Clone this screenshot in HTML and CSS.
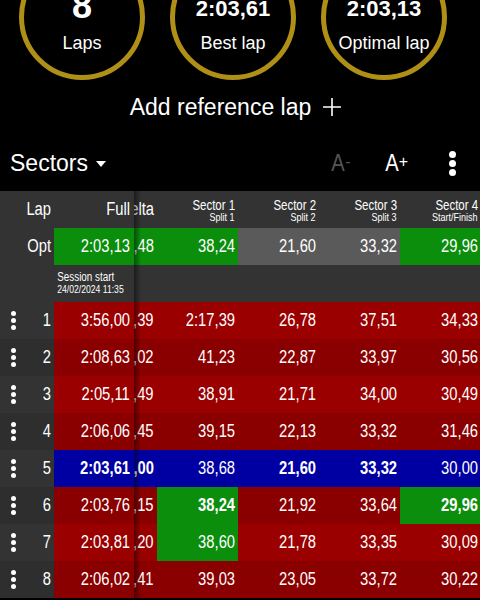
FILE: index.html
```html
<!DOCTYPE html>
<html lang="en">
<head>
    <meta charset="UTF-8">
    <meta name="viewport" content="width=device-width, initial-scale=1.0">
    <title>Session laps</title>
    <link rel="stylesheet" href="styles.css">
</head>
<body>
    <div class="summary">
        <div class="rings">
            <div class="ring">
                <div class="val big">8</div>
                <div class="label">Laps</div>
            </div>
            <div class="ring">
                <div class="val">2:03,61</div>
                <div class="label">Best lap</div>
            </div>
            <div class="ring">
                <div class="val">2:03,13</div>
                <div class="label">Optimal lap</div>
            </div>
        </div>
        <div class="add-ref">
            <span>Add reference lap</span>
            <svg width="20" height="20" viewBox="0 0 20 20"><path d="M10 1v18M1 10h18" stroke="#fff" stroke-width="1.6" fill="none"/></svg>
        </div>
    </div>

    <div class="toolbar">
        <div class="mode">Sectors <span class="caret"></span></div>
        <div class="tools">
            <span class="font-btn off"><span>A</span><sup>-</sup></span>
            <span class="font-btn"><span>A</span><sup>+</sup></span>
            <span class="menu"><i></i><i></i><i></i></span>
        </div>
    </div>

    <div class="table">
        <div class="row head">
            <div class="lap"><span>Lap</span></div>
            <div class="full"><span>Full</span></div>
            <div class="scroll"><div class="cols">
                <div class="c"><span>Delta</span></div>
                <div class="c two"><span>Sector 1</span><small>Split 1</small></div>
                <div class="c two"><span>Sector 2</span><small>Split 2</small></div>
                <div class="c two"><span>Sector 3</span><small>Split 3</small></div>
                <div class="c two"><span>Sector 4</span><small>Start/Finish</small></div>
            </div></div>
        </div>

        <div class="row opt">
            <div class="lap"><span>Opt</span></div>
            <div class="full green"><span>2:03,13</span></div>
            <div class="scroll"><div class="cols">
                <div class="c green"><span>-0,48</span></div>
                <div class="c green"><span>38,24</span></div>
                <div class="c grey"><span>21,60</span></div>
                <div class="c grey"><span>33,32</span></div>
                <div class="c green"><span>29,96</span></div>
            </div></div>
        </div>

        <div class="row session">
            <div class="lap"></div>
            <div class="note">
                <div class="note-title">Session start</div>
                <div class="note-date">24/02/2024 11:35</div>
            </div>
        </div>

        <div class="row lap-row odd">
            <div class="lap"><i class="dots"><i></i><i></i><i></i></i><span>1</span></div>
            <div class="full"><span>3:56,00</span></div>
            <div class="scroll"><div class="cols">
                <div class="c"><span>+1:52,39</span></div>
                <div class="c"><span>2:17,39</span></div>
                <div class="c"><span>26,78</span></div>
                <div class="c"><span>37,51</span></div>
                <div class="c"><span>34,33</span></div>
            </div></div>
        </div>
        <div class="row lap-row even">
            <div class="lap"><i class="dots"><i></i><i></i><i></i></i><span>2</span></div>
            <div class="full"><span>2:08,63</span></div>
            <div class="scroll"><div class="cols">
                <div class="c"><span>+5,02</span></div>
                <div class="c"><span>41,23</span></div>
                <div class="c"><span>22,87</span></div>
                <div class="c"><span>33,97</span></div>
                <div class="c"><span>30,56</span></div>
            </div></div>
        </div>
        <div class="row lap-row odd">
            <div class="lap"><i class="dots"><i></i><i></i><i></i></i><span>3</span></div>
            <div class="full"><span>2:05,11</span></div>
            <div class="scroll"><div class="cols">
                <div class="c"><span>+1,49</span></div>
                <div class="c"><span>38,91</span></div>
                <div class="c"><span>21,71</span></div>
                <div class="c"><span>34,00</span></div>
                <div class="c"><span>30,49</span></div>
            </div></div>
        </div>
        <div class="row lap-row even">
            <div class="lap"><i class="dots"><i></i><i></i><i></i></i><span>4</span></div>
            <div class="full"><span>2:06,06</span></div>
            <div class="scroll"><div class="cols">
                <div class="c"><span>+2,45</span></div>
                <div class="c"><span>39,15</span></div>
                <div class="c"><span>22,13</span></div>
                <div class="c"><span>33,32</span></div>
                <div class="c"><span>31,46</span></div>
            </div></div>
        </div>
        <div class="row lap-row best">
            <div class="lap"><i class="dots"><i></i><i></i><i></i></i><span>5</span></div>
            <div class="full b"><span>2:03,61</span></div>
            <div class="scroll"><div class="cols">
                <div class="c b"><span>0,00</span></div>
                <div class="c"><span>38,68</span></div>
                <div class="c b"><span>21,60</span></div>
                <div class="c b"><span>33,32</span></div>
                <div class="c"><span>30,00</span></div>
            </div></div>
        </div>
        <div class="row lap-row even">
            <div class="lap"><i class="dots"><i></i><i></i><i></i></i><span>6</span></div>
            <div class="full"><span>2:03,76</span></div>
            <div class="scroll"><div class="cols">
                <div class="c"><span>+0,15</span></div>
                <div class="c green b"><span>38,24</span></div>
                <div class="c"><span>21,92</span></div>
                <div class="c"><span>33,64</span></div>
                <div class="c green b"><span>29,96</span></div>
            </div></div>
        </div>
        <div class="row lap-row odd">
            <div class="lap"><i class="dots"><i></i><i></i><i></i></i><span>7</span></div>
            <div class="full"><span>2:03,81</span></div>
            <div class="scroll"><div class="cols">
                <div class="c"><span>+0,20</span></div>
                <div class="c green"><span>38,60</span></div>
                <div class="c"><span>21,78</span></div>
                <div class="c"><span>33,35</span></div>
                <div class="c"><span>30,09</span></div>
            </div></div>
        </div>
        <div class="row lap-row even">
            <div class="lap"><i class="dots"><i></i><i></i><i></i></i><span>8</span></div>
            <div class="full"><span>2:06,02</span></div>
            <div class="scroll"><div class="cols">
                <div class="c"><span>+2,41</span></div>
                <div class="c"><span>39,03</span></div>
                <div class="c"><span>23,05</span></div>
                <div class="c"><span>33,72</span></div>
                <div class="c"><span>30,22</span></div>
            </div></div>
        </div>

        <div class="shade"></div>
    </div>
</body>
</html>
```

FILE: styles.css
```css
body {
    margin: 0;
    background: #000;
    color: #fff;
    font-family: "Liberation Sans", Arial, sans-serif;
    overflow: hidden;
    height: 600px;
}

/* summary rings */
.rings {
    display: flex;
    gap: 25px;
    padding-left: 19px;
    margin-top: -46px;
}
.ring {
    width: 126px;
    height: 126px;
    box-sizing: border-box;
    border: 5px solid #b08f16;
    border-radius: 50%;
    display: flex;
    flex-direction: column;
    align-items: center;
    justify-content: flex-end;
    padding-bottom: 21px;
}
.val {
    font-size: 22px;
    font-weight: bold;
    line-height: 47px;
}
.val.big {
    font-size: 36px;
    line-height: 53px;
}
.label {
    font-size: 18px;
    line-height: 22px;
}
.add-ref {
    display: flex;
    justify-content: center;
    align-items: center;
    gap: 11px;
    margin-top: 12px;
    padding-right: 8px;
    font-size: 23px;
    line-height: 30px;
}

/* toolbar */
.toolbar {
    height: 69px;
    box-sizing: border-box;
    padding: 26px 24px 0 10px;
    display: flex;
    align-items: flex-start;
}
.mode {
    font-size: 23px;
    line-height: 30px;
    display: flex;
    align-items: center;
}
.caret {
    margin-left: 8px;
    margin-top: 2px;
    border-left: 5.5px solid transparent;
    border-right: 5.5px solid transparent;
    border-top: 6px solid #fff;
}
.tools {
    margin-left: auto;
    display: flex;
    align-items: flex-start;
}
.font-btn {
    display: flex;
    align-items: center;
    font-size: 24px;
    line-height: 30px;
    margin-right: 34px;
}
.font-btn span {
    display: inline-block;
    transform: scaleX(0.84);
    margin: 0 -1px;
}
.font-btn sup {
    font-size: 16px;
    line-height: 16px;
    margin-top: -3px;
}
.font-btn.off {
    color: #555;
}
.font-btn + .font-btn {
    margin-right: 41px;
}
.menu {
    display: flex;
    flex-direction: column;
    gap: 2px;
    margin-top: 3px;
}
.menu i {
    width: 7px;
    height: 7px;
    border-radius: 50%;
    background: #fff;
}

/* laps table, text squeezed to the narrow face of the app */
.table {
    position: relative;
    font-size: 18px;
}
.table span,
.table small {
    display: inline-block;
    transform: scaleX(0.82);
    transform-origin: 100% 50%;
    white-space: nowrap;
}
.row {
    display: grid;
    grid-template-columns: 54px 80px 1fr;
    height: 37px;
    background: #333;
}
.lap {
    display: flex;
    align-items: center;
    justify-content: flex-end;
    padding-right: 3px;
    background: #333;
}
.full {
    text-align: right;
    padding-right: 4px;
    line-height: 37px;
    white-space: nowrap;
    overflow: hidden;
}
.scroll {
    overflow: hidden;
}
.cols {
    display: flex;
    margin-left: -58px;
    height: 100%;
}
.c {
    flex: none;
    width: 81px;
    box-sizing: border-box;
    padding-right: 3px;
    text-align: right;
    line-height: 37px;
    white-space: nowrap;
}
.c.two {
    display: flex;
    flex-direction: column;
    justify-content: center;
    align-items: flex-end;
    padding-top: 1px;
}
.c.two span {
    font-size: 14px;
    line-height: 14px;
}
.c.two small {
    font-size: 11px;
    line-height: 11px;
}
.b {
    font-weight: bold;
}
.green {
    background: #0a8e0c;
}
.grey {
    background: #5a5a5a;
}

.session .note {
    grid-column: 2 / 4;
    padding: 6px 0 0 4px;
    transform: scaleX(0.82);
    transform-origin: 0 0;
}
.note-title {
    font-size: 12px;
    line-height: 13px;
}
.note-date {
    font-size: 10.5px;
    line-height: 11px;
}

.lap-row {
    background: #9a0000;
}
.lap-row.even {
    background: #8a0000;
}
.lap-row.even .lap {
    background: #2e2e2e;
}
.lap-row.best {
    background: #0000a2;
}
.lap-row .lap {
    justify-content: space-between;
    padding-left: 11px;
}
.dots {
    display: flex;
    flex-direction: column;
    gap: 2px;
}
.dots i {
    width: 5px;
    height: 5px;
    border-radius: 50%;
    background: #fff;
}

.shade {
    position: absolute;
    top: 0;
    bottom: 0;
    left: 134px;
    width: 7px;
    background: linear-gradient(to right, rgba(0, 0, 0, 0.45), rgba(0, 0, 0, 0));
}
```
